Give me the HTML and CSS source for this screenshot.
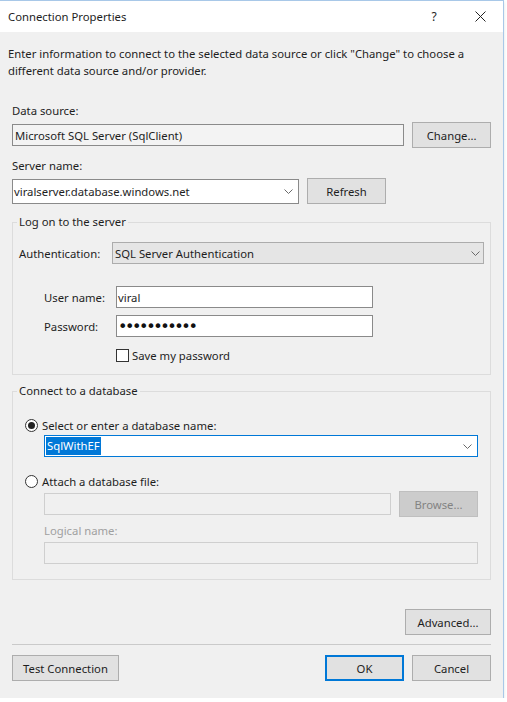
FILE: index.html
```html
<!DOCTYPE html>
<html lang="en">
<head>
    <meta charset="UTF-8">
    <title>Connection Properties</title>
    <link rel="stylesheet" href="styles.css">
</head>
<body>
    <div class="window">
        <!-- Caption bar -->
        <div class="titlebar">
            <span class="title">Connection Properties</span>
            <span class="cap-btn help">?</span>
            <span class="cap-btn close">
                <svg width="11" height="11" viewBox="0 0 11 11"><path d="M0.5 0.5 L10.5 10.5 M10.5 0.5 L0.5 10.5" stroke="#222" stroke-width="1" fill="none"/></svg>
            </span>
        </div>

        <div class="content">
            <p class="intro">Enter information to connect to the selected data source or click "Change" to choose a<br>different data source and/or provider.</p>

            <div class="field-label first">Data source:</div>
            <div class="row">
                <div class="textbox readonly source-box">Microsoft SQL Server (SqlClient)</div>
                <button class="btn">Change...</button>
            </div>

            <div class="field-label">Server name:</div>
            <div class="row server-row">
                <div class="textbox combo server-box">
                    <span>viralserver.database.windows.net</span>
                    <svg class="chevron" width="9" height="5" viewBox="0 0 9 5"><polyline points="0.5,0.5 4.5,4.5 8.5,0.5" stroke="#6a6a6a" fill="none"/></svg>
                </div>
                <button class="btn">Refresh</button>
            </div>

            <!-- Login details -->
            <fieldset class="group logon">
                <legend>Log on to the server</legend>
                <div class="auth-row">
                    <span class="auth-label">Authentication:</span>
                    <div class="dropdown">
                        <span>SQL Server Authentication</span>
                        <svg class="chevron" width="9" height="5" viewBox="0 0 9 5"><polyline points="0.5,0.5 4.5,4.5 8.5,0.5" stroke="#6a6a6a" fill="none"/></svg>
                    </div>
                </div>
                <div class="cred-row user-row">
                    <span class="cred-label">User name:</span>
                    <div class="textbox cred-box">viral</div>
                </div>
                <div class="cred-row pass-row">
                    <span class="cred-label">Password:</span>
                    <div class="textbox cred-box"><span class="dots">•••••••••••</span></div>
                </div>
                <div class="check-row">
                    <span class="checkbox"></span>
                    <span>Save my password</span>
                </div>
            </fieldset>

            <!-- Database choice -->
            <fieldset class="group database">
                <legend>Connect to a database</legend>
                <div class="radio-row">
                    <span class="radio checked"></span>
                    <span>Select or enter a database name:</span>
                </div>
                <div class="textbox combo focused db-box">
                    <span class="selected-text">SqlWithEF</span>
                    <svg class="chevron" width="9" height="5" viewBox="0 0 9 5"><polyline points="0.5,0.5 4.5,4.5 8.5,0.5" stroke="#6a6a6a" fill="none"/></svg>
                </div>
                <div class="radio-row attach-row">
                    <span class="radio"></span>
                    <span>Attach a database file:</span>
                </div>
                <div class="row file-row">
                    <div class="textbox disabled file-box"></div>
                    <button class="btn disabled">Browse...</button>
                </div>
                <div class="muted-label">Logical name:</div>
                <div class="textbox disabled logical-box"></div>
            </fieldset>

            <div class="advanced-row">
                <button class="btn advanced">Advanced...</button>
            </div>

            <hr class="separator">

            <div class="footer">
                <button class="btn test">Test Connection</button>
                <button class="btn default">OK</button>
                <button class="btn">Cancel</button>
            </div>
        </div>
    </div>
</body>
</html>
```

FILE: styles.css
```css
body {
    margin: 0;
    background: #fff;
    font-family: "Noto Sans", "Open Sans", sans-serif;
    font-size: 11.3px;
    color: #1e1e1e;
}

.window {
    width: 503px;
    height: 697px;
    background: #f0f0f0;
    border-top: 1px solid #a8c8e8;
    border-right: 1px solid #a8c8e8;
    box-shadow: 0 2px 3px rgba(0, 0, 0, 0.12);
}

.titlebar {
    height: 31px;
    background: #fff;
    display: flex;
    align-items: center;
    padding-left: 8px;
}
.title { flex: 1; }
.cap-btn {
    width: 46px;
    height: 31px;
    display: flex;
    align-items: center;
    justify-content: center;
}
.help { font-size: 12px; }

.content { padding: 13px 12px 0 12px; }

.intro {
    margin: 0 0 0 -4px;
    line-height: 17px;
}

.field-label {
    line-height: 16px;
    margin-top: 10px;
}
.field-label.first { margin-top: 24px; }

.muted-label {
    line-height: 16px;
    color: #a0a0a0;
    margin: 6px 0 0 19px;
}

.row {
    display: flex;
    align-items: center;
    gap: 8px;
    height: 26px;
    margin-top: 3px;
}
.server-row { margin-top: 4px; }

.textbox {
    box-sizing: border-box;
    height: 22px;
    border: 1px solid #8a8a8a;
    background: #fff;
    padding-left: 2px;
    display: flex;
    align-items: center;
    white-space: nowrap;
}
.textbox.readonly { background: #f3f3f3; }
.textbox.disabled {
    background: #f0f0f0;
    border-color: #cfcfcf;
}
.combo { justify-content: space-between; padding-left: 1px; }
.chevron { margin-right: 5px; }

.source-box { width: 394px; }
.server-box { width: 287px; height: 25px; }

.btn {
    box-sizing: border-box;
    height: 26px;
    width: 79px;
    font-family: inherit;
    font-size: 11.3px;
    color: #1e1e1e;
    background: #e1e1e1;
    border: 1px solid #adadad;
    padding: 0;
}
.btn.disabled {
    background: #cccccc;
    border-color: #bfbfbf;
    color: #838383;
}
.btn.default {
    border: 1px solid #0078d7;
    box-shadow: inset 0 0 0 1px #0078d7;
}

.group {
    margin: 10px 0 0 0;
    border: 1px solid #dcdcdc;
    padding: 12px 6px 12px 6px;
    min-width: 0;
}
.group legend {
    padding: 0 2px;
    margin-left: -2px;
    line-height: 16px;
}

.auth-row {
    display: flex;
    align-items: center;
}
.auth-label { width: 93px; }
.dropdown {
    box-sizing: border-box;
    flex: 1;
    height: 22px;
    background: #e5e5e5;
    border: 1px solid #acacac;
    padding-left: 2px;
    display: flex;
    align-items: center;
    justify-content: space-between;
}
.dropdown .chevron { margin-right: 3px; }

.cred-row {
    display: flex;
    align-items: center;
    padding-left: 25px;
}
.user-row { margin-top: 22px; }
.pass-row { margin-top: 7px; }
.cred-label { width: 72px; }
.cred-box { width: 257px; padding-left: 1px; }
.dots {
    font-family: "DejaVu Sans", sans-serif;
    font-size: 16px;
    letter-spacing: -2.4px;
    color: #111;
}

.check-row {
    display: flex;
    align-items: center;
    gap: 3px;
    height: 14px;
    margin: 11px 0 0 97px;
}
.checkbox {
    box-sizing: border-box;
    width: 13px;
    height: 13px;
    border: 1px solid #333;
    background: #fff;
}

.group.database {
    margin-top: 8px;
    padding: 18px 12px 15px 12px;
}
.group.database legend { margin-left: -8px; }

.radio-row {
    display: flex;
    align-items: center;
    gap: 4px;
    height: 16px;
}
.attach-row { margin-top: 16px; }
.radio {
    box-sizing: border-box;
    width: 13px;
    height: 13px;
    border: 1px solid #333;
    border-radius: 50%;
    background: #fff;
    display: flex;
    align-items: center;
    justify-content: center;
}
.radio.checked::after {
    content: "";
    width: 7px;
    height: 7px;
    border-radius: 50%;
    background: #222;
}

.db-box {
    margin: 2px 0 0 19px;
    border-color: #0078d7;
}
.selected-text {
    background: #0078d7;
    color: #fff;
    line-height: 18px;
    padding: 0 1px;
}

.file-row { margin: 2px 0 0 19px; }
.file-box { flex: 1; }
.logical-box { margin: 3px 0 0 19px; }

.advanced-row {
    display: flex;
    justify-content: flex-end;
    margin-top: 29px;
}
.btn.advanced { width: 86px; }

.separator {
    border: 0;
    border-top: 1px solid #cacaca;
    margin: 9px 0 0 0;
}

.footer {
    display: flex;
    gap: 8px;
    margin-top: 10px;
}
.btn.test { width: 107px; margin-right: auto; }
```
